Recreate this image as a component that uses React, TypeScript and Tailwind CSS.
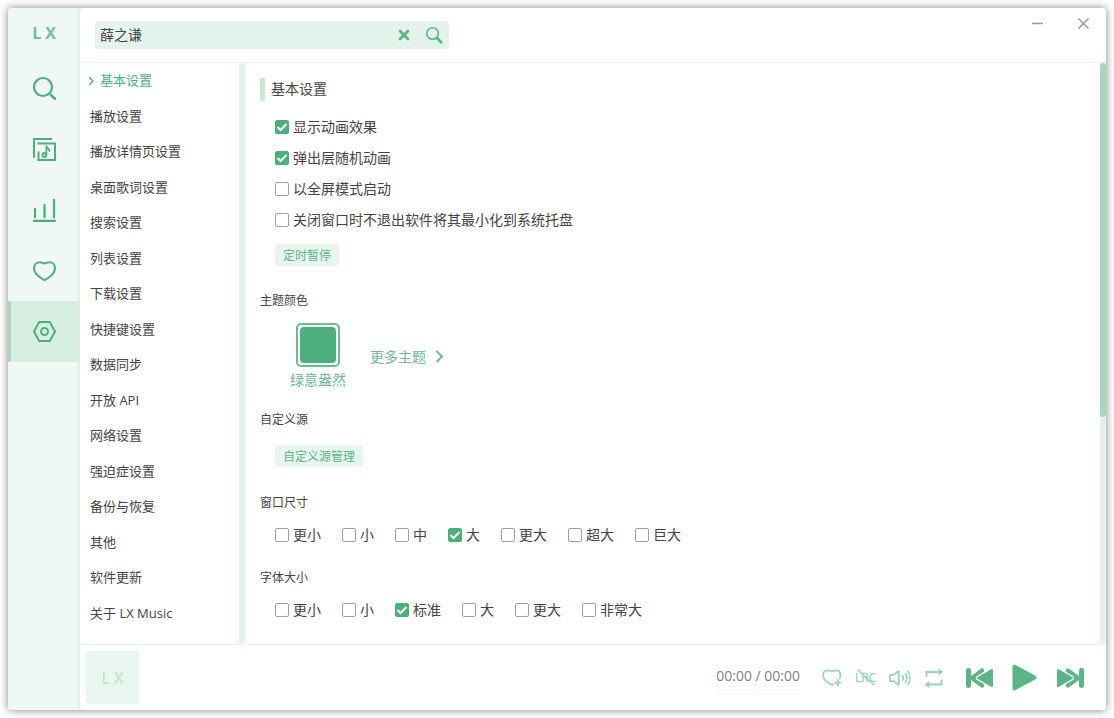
import { useState, type ReactNode } from "react";

const SIDE_ITEMS: { id: string; label: string; icon: ReactNode }[] = [
  {
    id: "search",
    label: "搜索",
    icon: (
      <>
        <circle cx="11" cy="11" r="9" strokeWidth="2.2" />
        <path d="M19 19l4 3.8" strokeWidth="2.6" />
      </>
    ),
  },
  {
    id: "songlist",
    label: "歌单",
    icon: (
      <>
        <path d="M20 2H2v18.8" strokeLinecap="butt" />
        <path d="M5.5 6.5H23V23H6.5v-8.5" strokeLinecap="butt" strokeLinejoin="miter" />
        <circle cx="12.4" cy="18" r="1.9" />
        <path d="M14.4 18V9.2c.4 2 3.4 2.4 3 5" strokeWidth="1.8" />
      </>
    ),
  },
  {
    id: "leaderboard",
    label: "排行榜",
    icon: <path d="M2 22.8h21M3 11v8.3M12.5 7.2v12.1M22 2v17.3" strokeWidth="2.3" />,
  },
  {
    id: "love",
    label: "收藏",
    icon: (
      <path d="M12.5 21.2C8.6 19 2 14.4 2 9.4 2 5.6 4.6 3.2 7.7 3.2c2.3 0 3.3 1.2 4.8 1.2s2.5-1.2 4.8-1.2c3.1 0 5.7 2.4 5.7 6.2 0 5-6.6 9.6-10.5 11.8z" />
    ),
  },
  {
    id: "setting",
    label: "设置",
    icon: (
      <>
        <path d="M7.200 2h10.600l5.200 9.500-5.200 9.500H7.200L2 11.500z" />
        <circle cx="12.5" cy="11.500" r="3.500" />
      </>
    ),
  },
];

const NAV = [
  "基本设置",
  "播放设置",
  "播放详情页设置",
  "桌面歌词设置",
  "搜索设置",
  "列表设置",
  "下载设置",
  "快捷键设置",
  "数据同步",
  "开放 API",
  "网络设置",
  "强迫症设置",
  "备份与恢复",
  "其他",
  "软件更新",
  "关于 LX Music",
];

const BASIC_OPTIONS = [
  { label: "显示动画效果", checked: true },
  { label: "弹出层随机动画", checked: true },
  { label: "以全屏模式启动", checked: false },
  { label: "关闭窗口时不退出软件将其最小化到系统托盘", checked: false },
];

const WINDOW_SIZES = ["更小", "小", "中", "大", "更大", "超大", "巨大"];
const FONT_SIZES = ["更小", "小", "标准", "大", "更大", "非常大"];

type CheckProps = {
  label: string;
  type?: "checkbox" | "radio";
  name?: string;
  defaultChecked?: boolean;
};

function Check({ label, type = "checkbox", name, defaultChecked }: CheckProps) {
  return (
    <label className="flex h-[31px] cursor-pointer items-center gap-1 text-sm">
      <span className="grid size-3.5 shrink-0">
        <input
          type={type}
          name={name}
          defaultChecked={defaultChecked}
          className="peer col-start-1 row-start-1 size-3.5 appearance-none rounded-[2px] border border-[#a0a0a0] bg-white checked:border-[#4daf7c] checked:bg-[#4daf7c]"
        />
        <svg
          viewBox="0 0 14 14"
          className="pointer-events-none invisible col-start-1 row-start-1 size-3.5 fill-none stroke-white stroke-2 peer-checked:visible"
        >
          <path d="M2.500 7l3 3 6-6" />
        </svg>
      </span>
      {label}
    </label>
  );
}

function RadioRow({ name, items, value }: { name: string; items: string[]; value: string }) {
  return (
    <div className="mt-1.5 flex flex-wrap gap-x-[21px] pl-[15px]">
      {items.map((item) => (
        <Check key={item} type="radio" name={name} label={item} defaultChecked={item === value} />
      ))}
    </div>
  );
}

function SmallButton({ children }: { children: ReactNode }) {
  return (
    <button className="ml-[15px] block h-[22px] rounded-[3px] bg-[#e8f5ef] px-2 pt-0.5 text-xs text-[#5bb587]">
      {children}
    </button>
  );
}

function Sidebar() {
  return (
    <aside className="w-[72px] shrink-0 bg-[#eff8f4]">
      <div className="flex h-[49px] items-center justify-center gap-1 text-base font-bold text-[#71bf96]">
        <span>L</span>
        <span>X</span>
      </div>
      <nav>
        {SIDE_ITEMS.map(({ id, label, icon }) => {
          const active = id === "setting";
          return (
            <a
              key={id}
              href={`#${id}`}
              aria-label={label}
              className={`relative flex h-[61px] items-center justify-center ${active ? "bg-[#d9eee3]" : ""}`}
            >
              {active && <span className="absolute inset-y-0 left-0 w-[3px] rounded-r-[2px] bg-[#a6d7bd]" />}
              <svg
                viewBox="0 0 24 24"
                className="size-6 fill-none stroke-[#4daf7c] stroke-2"
                strokeLinecap="round"
                strokeLinejoin="round"
              >
                {icon}
              </svg>
            </a>
          );
        })}
      </nav>
    </aside>
  );
}

function Header() {
  const [text, setText] = useState("薛之谦");

  return (
    <header className="flex h-[55px] shrink-0 items-start justify-between border-b border-[#e8f5ef] pt-[13px] pl-[15px]">
      <form
        className="flex h-7 w-[354px] items-center rounded-[3px] bg-[#e4f3eb]"
        onSubmit={(e) => e.preventDefault()}
      >
        <input
          type="text"
          aria-label="搜索"
          value={text}
          onChange={(e) => setText(e.target.value)}
          className="h-full min-w-0 flex-1 bg-transparent px-[5px] pb-0.5 text-sm text-[#444] outline-none"
        />
        <button type="button" aria-label="清除" onClick={() => setText("")} className="flex w-[30px] justify-center">
          <svg viewBox="0 0 12 12" className="size-3 fill-none stroke-[#5bb587] stroke-3" strokeLinecap="round">
            <path d="M2.200 2.200l7.600 7.600M9.800 2.200l-7.600 7.600" />
          </svg>
        </button>
        <button type="submit" aria-label="搜索" className="flex w-[30px] justify-center">
          <svg viewBox="0 0 18 18" className="size-[18px] fill-none stroke-[#5bb587]" strokeLinecap="round">
            <circle cx="7.500" cy="7.500" r="5.800" strokeWidth="1.600" />
            <path d="M12 12l4.200 4.200" strokeWidth="2.800" />
          </svg>
        </button>
      </form>
      <div className="flex gap-8 pr-4 text-[#999]">
        <button aria-label="最小化" className="-mt-1.5">
          <svg viewBox="0 0 14 14" className="size-3.5 fill-none stroke-current">
            <path d="M2 8.500h11" strokeWidth="1.500" />
          </svg>
        </button>
        <button aria-label="关闭" className="-mt-1.5">
          <svg viewBox="0 0 14 14" className="size-3.5 fill-none stroke-current">
            <path d="M2.500 3.500l10 10M12.500 3.500l-10 10" strokeWidth="1.500" />
          </svg>
        </button>
      </div>
    </header>
  );
}

function SettingNav() {
  return (
    <nav className="flex w-[159px] shrink-0 flex-col pb-[13px] text-[13px]">
      {NAV.map((item, i) => (
        <a
          key={item}
          href={`#setting-${i}`}
          className={
            i === 0
              ? "flex flex-1 items-center gap-1.5 pl-2 text-[#4daf7c]"
              : "flex flex-1 items-center pl-2.5"
          }
        >
          {i === 0 && (
            <svg viewBox="0 0 6 10" className="h-2.5 w-1.5 fill-none stroke-current stroke-[1.500]">
              <path d="M1 1l4 4-4 4" />
            </svg>
          )}
          {item}
        </a>
      ))}
    </nav>
  );
}

function Settings() {
  return (
    <main className="min-w-0 flex-1 overflow-hidden px-[15px] pt-[15px]">
      <h2 className="h-[23px] border-l-[5px] border-[#c8e7d7] pl-1.5 text-sm leading-[21px]">基本设置</h2>
      <div className="mt-2.5 flex flex-col items-start pl-[15px]">
        {BASIC_OPTIONS.map((o) => (
          <Check key={o.label} label={o.label} defaultChecked={o.checked} />
        ))}
      </div>
      <div className="mt-[9px]">
        <SmallButton>定时暂停</SmallButton>
      </div>

      <h3 className="mt-[25px] text-xs leading-5">主题颜色</h3>
      <div className="mt-3 flex items-center gap-6 pl-[30px] text-sm leading-5 text-[#6fb993]">
        <button className="flex flex-col items-center gap-[3px]">
          <span className="size-11 rounded-[5px] border-2 border-[#6fb993] p-0.5">
            <span className="block h-full rounded-[4px] bg-[#4daf7c]" />
          </span>
          绿意盎然
        </button>
        <button className="flex items-center gap-2">
          更多主题
          <svg viewBox="0 0 10 14" className="h-3.5 w-2.5 fill-none stroke-current stroke-2">
            <path d="M2.500 1l5.500 5.500-5.500 5.500" />
          </svg>
        </button>
      </div>

      <h3 className="mt-5 text-xs leading-5">自定义源</h3>
      <div className="mt-[15px]">
        <SmallButton>自定义源管理</SmallButton>
      </div>

      <h3 className="mt-[26px] text-xs leading-5">窗口尺寸</h3>
      <RadioRow name="window-size" items={WINDOW_SIZES} value="大" />

      <h3 className="mt-[18px] text-xs leading-5">字体大小</h3>
      <RadioRow name="font-size" items={FONT_SIZES} value="标准" />
    </main>
  );
}

function Player() {
  return (
    <footer className="flex h-[66px] shrink-0 items-center border-t border-[#e8f5ef] pr-[21px] pl-1.5">
      <div className="flex size-[53px] items-center justify-center gap-1 rounded-[4px] bg-[#e9f5ef] text-base font-semibold text-[#c3e4d3]">
        <span>L</span>
        <span>X</span>
      </div>
      <div className="ml-auto border-b border-[#eff8f4] pb-0.5 text-sm leading-6 text-[#808080]">00:00 / 00:00</div>
      <div className="ml-[21px] flex items-center gap-3 text-[#9bd3b5]">
        <button aria-label="收藏">
          <svg
            viewBox="0 0 22 22"
            className="size-[22px] fill-none stroke-current stroke-[1.800]"
            strokeLinecap="round"
            strokeLinejoin="round"
          >
            <path d="M12 17.300l-1 .6C7.200 16.200 2 12.500 2 8.300c0-3 2-5 4.600-5 1.900 0 2.900 1 4.200 1s2.200-1 4.200-1c2.600 0 4.500 2 4.500 4.700 0 1.200-.3 2.200-.8 3.200" />
            <path d="M16.800 12.800v5.700M14 15.600h5.700" />
          </svg>
        </button>
        <button aria-label="桌面歌词">
          <svg viewBox="0 0 22 22" className="size-[22px] fill-current stroke-current">
            <text x="0" y="15" fontSize="12" strokeWidth="0.3">
              LRC
            </text>
            <path d="M2.500 2.500l16.500 15.500" strokeWidth="1.600" />
          </svg>
        </button>
        <button aria-label="音量">
          <svg
            viewBox="0 0 22 22"
            className="size-[22px] fill-none stroke-current stroke-[1.800]"
            strokeLinecap="round"
            strokeLinejoin="round"
          >
            <path d="M1 7.800v6.400h3.600l5.200 3.700V4.100L4.600 7.800z" />
            <path d="M13.500 8.500c1 1.500 1 3.500 0 5M16.300 6.300c2 2.800 2 6.600 0 9.400M19 4.200c2.700 4 2.700 9.600 0 13.600" strokeWidth="1.500" />
          </svg>
        </button>
        <button aria-label="播放模式">
          <svg viewBox="0 0 22 22" className="size-[22px] fill-none stroke-current stroke-2">
            <path d="M3.500 9.500V5H16M18.500 12.500V17.500H6" />
            <path d="M15.500 1.200L20.200 5l-4.700 3.800zM6.500 13.700L1.800 17.500l4.700 3.800z" className="fill-current stroke-none" />
          </svg>
        </button>
      </div>
      <div className="ml-5 flex items-center gap-4 text-[#5bb587]">
        <button aria-label="上一曲">
          <svg viewBox="0 0 30 30" className="size-[30px] fill-current stroke-current" strokeLinecap="round" strokeLinejoin="round">
            <path d="M3.500 7.500v15" strokeWidth="5" />
            <path d="M17 7.700L7 15l10 7.300" fill="none" strokeWidth="4.500" />
            <path d="M26.800 7.300v15.400L13.500 15z" stroke="white" strokeWidth="5" />
            <path d="M26.800 7.300v15.400L13.500 15z" strokeWidth="2.500" />
          </svg>
        </button>
        <button aria-label="播放">
          <svg viewBox="0 0 28 30" className="h-[30px] w-7 fill-current stroke-current" strokeLinejoin="round">
            <path d="M3.500 3.800v21.600L23.500 14.600z" strokeWidth="4" />
          </svg>
        </button>
        <button aria-label="下一曲">
          <svg viewBox="0 0 30 30" className="size-[30px] fill-current stroke-current" strokeLinecap="round" strokeLinejoin="round">
            <path d="M26.500 7.500v15" strokeWidth="5" />
            <path d="M13 7.700L23 15l-10 7.300" fill="none" strokeWidth="4.500" />
            <path d="M3.200 7.300v15.400L16.500 15z" stroke="white" strokeWidth="5" />
            <path d="M3.200 7.300v15.400L16.500 15z" strokeWidth="2.500" />
          </svg>
        </button>
      </div>
    </footer>
  );
}

export default function App() {
  return (
    <div className="h-screen bg-white p-2 font-['Open_Sans','Noto_Sans_CJK_SC',sans-serif] text-[#444]">
      <div className="flex h-full overflow-hidden rounded-[4px] bg-[#eff8f4] shadow-[0_0_8px_rgba(0,0,0,0.5)]">
        <Sidebar />
        <div className="flex min-w-0 flex-1 flex-col rounded-l-[4px] bg-white shadow-[0_0_4px_rgba(77,175,124,0.2)]">
          <Header />
          <div className="flex min-h-0 flex-1">
            <SettingNav />
            <div className="w-1.5 shrink-0 rounded-[3px] bg-[#e4f3eb]" />
            <Settings />
            {/* scrollbar */}
            <div className="w-1.5 shrink-0 rounded-[3px] bg-[#e4f3eb]">
              <div className="h-[61%] rounded-[3px] bg-[#a6d7bd]" />
            </div>
          </div>
          <Player />
        </div>
      </div>
    </div>
  );
}
